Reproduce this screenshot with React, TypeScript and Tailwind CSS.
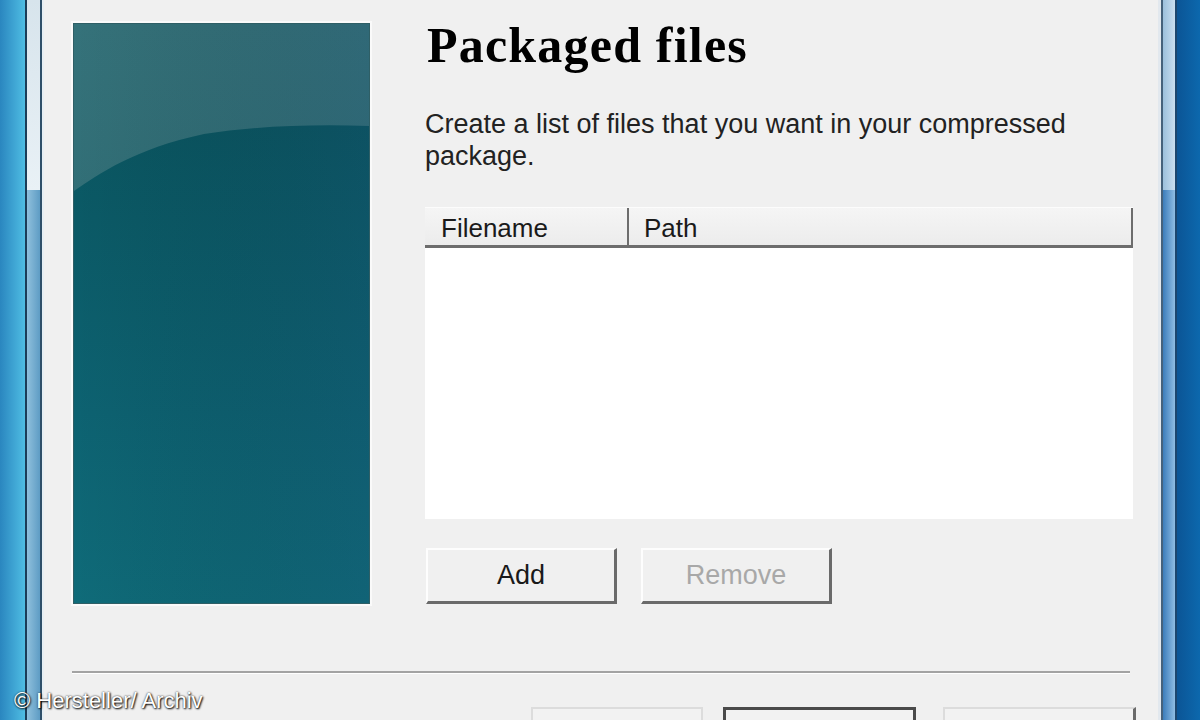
const ui = { fontFamily: '"Liberation Sans", Arial, sans-serif' };
const serif = { fontFamily: '"Liberation Serif", "Times New Roman", serif' };

function LeftFrame() {
  return (
    <div className="flex h-full w-[44px] shrink-0">
      <div className="h-full w-[25px] bg-gradient-to-r from-[#2a86bf] to-[#4fbde3]" />
      <div className="h-full w-[2px] bg-[#1b3d58]" />
      <div className="flex h-full w-[13px] flex-col">
        <div className="h-[190px] bg-gradient-to-b from-[#d7e4ec] to-[#e9f1f6]" />
        <div className="flex-1 bg-gradient-to-r from-[#8fc0dc] to-[#5e9cc4]" />
      </div>
      <div className="h-full w-[2px] bg-[#2f4f69]" />
      <div className="h-full w-[2px] bg-[#e6eef3]" />
    </div>
  );
}

function RightFrame() {
  return (
    <div className="flex h-full w-[42px] shrink-0">
      <div className="h-full w-[3px] bg-[#e2e8ee]" />
      <div className="h-full w-[2px] bg-[#46627c]" />
      <div className="flex h-full w-[12px] flex-col">
        <div className="h-[190px] bg-gradient-to-r from-[#9cc0dc] to-[#c9def0]" />
        <div className="flex-1 bg-gradient-to-r from-[#3b7dbb] to-[#8fbde3]" />
      </div>
      <div className="h-full w-[2px] bg-[#1c466e]" />
      <div className="h-full flex-1 bg-gradient-to-r from-[#0b5596] to-[#0c68ad]" />
    </div>
  );
}

function SidePanel() {
  return (
    <div className="mt-[3px] h-[581px] w-[297px] shrink-0 border border-[#2f5f66] shadow-[0_0_0_2px_#fafafa]">
      <svg width="100%" height="100%" viewBox="0 0 295 579" preserveAspectRatio="none">
        <defs>
          <linearGradient id="up" x1="0" y1="0" x2="0" y2="1">
            <stop offset="0" stopColor="#35727a" />
            <stop offset="1" stopColor="#286870" />
          </linearGradient>
          <linearGradient id="low" x1="0" y1="0" x2="0" y2="1">
            <stop offset="0" stopColor="#0a5661" />
            <stop offset="0.6" stopColor="#0d6271" />
            <stop offset="1" stopColor="#0f6b79" />
          </linearGradient>
          <linearGradient id="side" x1="0" y1="0" x2="1" y2="0">
            <stop offset="0" stopColor="#000" stopOpacity="0" />
            <stop offset="1" stopColor="#1a3f6a" stopOpacity="0.18" />
          </linearGradient>
        </defs>
        <rect width="295" height="579" fill="url(#up)" />
        <path d="M0 167 C 25 150, 60 125, 130 110 C 180 102, 240 100, 295 102 L295 579 L0 579 Z" fill="url(#low)" />
        <rect width="295" height="579" fill="url(#side)" />
      </svg>
    </div>
  );
}

function RaisedButton({ label, disabled }: { label: string; disabled?: boolean }) {
  return (
    <div
      className={
        "flex h-[56px] w-[191px] items-center justify-center border-t-2 border-l-2 border-r-[3px] border-b-[3px] border-t-[#fdfdfd] border-l-[#fdfdfd] border-r-[#6a6a6a] border-b-[#6a6a6a] bg-[#f0f0f0] text-[27px] " +
        (disabled ? "text-[#a8a8a8]" : "text-[#1a1a1a]")
      }
    >
      {label}
    </div>
  );
}

function FileList() {
  return (
    <div className="mt-[35px] w-[708px]">
      <div className="flex h-[41px] border-t border-t-[#fcfcfc] border-b-[3px] border-b-[#6d6d6d] bg-gradient-to-b from-[#f5f5f5] to-[#ececec] text-[26px] text-[#1a1a1a]">
        <div className="flex w-[204px] items-center border-r-2 border-r-[#6d6d6d] pl-[16px] pt-[4px]">Filename</div>
        <div className="flex flex-1 items-center border-r-2 border-r-[#6d6d6d] pl-[15px] pt-[4px]">Path</div>
      </div>
      <div className="h-[271px] bg-white" />
    </div>
  );
}

export default function App() {
  return (
    <div className="relative flex h-[720px] w-[1200px] overflow-hidden bg-[#f0f0f0]" style={ui}>
      <LeftFrame />
      <main className="flex flex-1 flex-col">
        <div className="flex pl-[29px] pt-[20px]">
          <SidePanel />
          <div className="ml-[55px] flex flex-col">
            <h1 className="ml-[2px] h-[50px] text-[50px] font-bold leading-none tracking-[1.2px] text-black" style={serif}>
              Packaged files
            </h1>
            <p className="mt-[38px] text-[27px] leading-[32px] text-[#222]">
              Create a list of files that you want in your compressed
              <br />
              package.
            </p>
            <FileList />
            <div className="ml-[1px] mt-[29px] flex gap-[24px]">
              <RaisedButton label="Add" />
              <RaisedButton label="Remove" disabled />
            </div>
          </div>
        </div>
        <div className="ml-[28px] mt-[67px] w-[1058px] border-t-2 border-b border-t-[#a3a3a3] border-b-white" />
        <div className="mt-[33px] flex pl-[487px]">
          <div className="h-[40px] w-[172px] border-2 border-[#dcdcdc] bg-[#f2f2f2]" />
          <div className="ml-[20px] h-[40px] w-[193px] border-[3px] border-[#4a4a4a] bg-[#f2f2f2]" />
          <div className="ml-[27px] h-[40px] w-[193px] border-2 border-[#dcdcdc] border-r-[3px] border-r-[#6a6a6a] bg-[#f2f2f2]" />
        </div>
      </main>
      <RightFrame />
      <div className="absolute left-[14px] top-[684px] text-[22px] text-white [text-shadow:1px_1px_2px_#000,0_0_2px_#333]">
        © Hersteller/ Archiv
      </div>
    </div>
  );
}
